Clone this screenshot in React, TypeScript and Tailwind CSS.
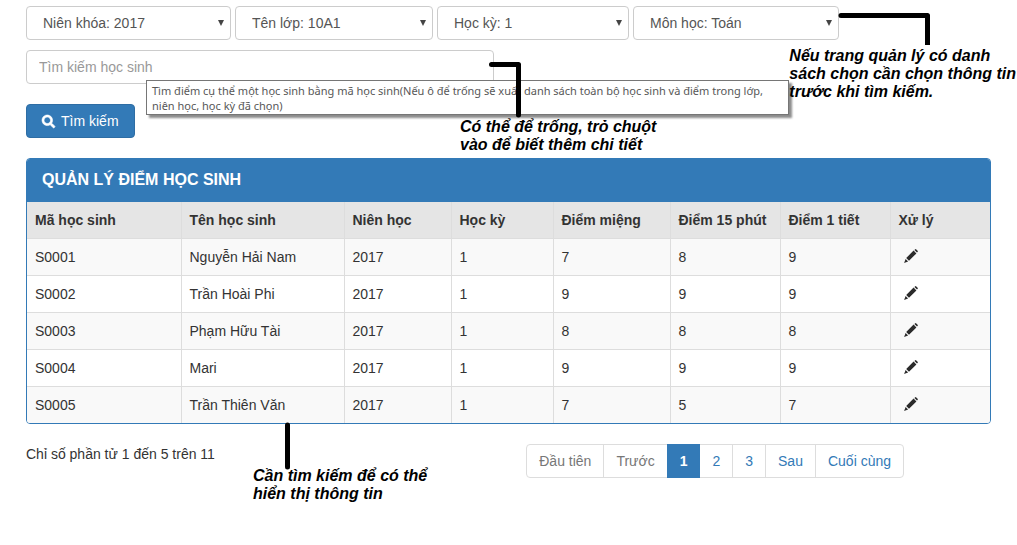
import { FaSearch } from 'react-icons/fa';

type Filter = { id: string; label: string; value: string };
type Student = { id: string; name: string; year: string; term: string; scores: string[] };

const filters: Filter[] = [
  { id: 'year', label: 'Niên khóa', value: '2017' },
  { id: 'class', label: 'Tên lớp', value: '10A1' },
  { id: 'term', label: 'Học kỳ', value: '1' },
  { id: 'subject', label: 'Môn học', value: 'Toán' },
];

const headers = ['Mã học sinh', 'Tên học sinh', 'Niên học', 'Học kỳ', 'Điểm miệng', 'Điểm 15 phút', 'Điểm 1 tiết', 'Xử lý'];

const students: Student[] = [
  { id: 'S0001', name: 'Nguyễn Hải Nam', year: '2017', term: '1', scores: ['7', '8', '9'] },
  { id: 'S0002', name: 'Trần Hoài Phi', year: '2017', term: '1', scores: ['9', '9', '9'] },
  { id: 'S0003', name: 'Phạm Hữu Tài', year: '2017', term: '1', scores: ['8', '8', '8'] },
  { id: 'S0004', name: 'Mari', year: '2017', term: '1', scores: ['9', '9', '9'] },
  { id: 'S0005', name: 'Trần Thiên Văn', year: '2017', term: '1', scores: ['7', '5', '7'] },
];

const cell = 'border-r border-[#ddd] px-2 last:border-r-0';
const note = 'absolute z-20 whitespace-nowrap text-[16px] leading-[18px] font-bold italic text-black';
const pageItem = 'block border border-[#ddd] px-3 py-[6px] leading-5';

function FilterSelect({ filter }: { filter: Filter }) {
  return (
    <div className="relative">
      <select
        id={filter.id}
        aria-label={filter.label}
        className="h-[34px] w-full appearance-none rounded border border-[#ccc] bg-white pr-6 pl-4 text-sm text-[#555]"
      >
        <option>{`${filter.label}: ${filter.value}`}</option>
      </select>
      <svg viewBox="0 0 6 6" className="pointer-events-none absolute top-[14px] right-[7px] h-[6px] w-[6px]" fill="#444" aria-hidden="true">
        <path d="M0 0h6L3 6z" />
      </svg>
    </div>
  );
}

function Pencil() {
  return (
    <svg viewBox="0 0 14 14" className="h-[14px] w-[14px]" fill="#2b2b2b" aria-hidden="true">
      <path d="M10.400 1 11.300.3q.5-.4 1 .1l1.300 1.300q.5.5.1 1l-.7.9zM9.600 1.600l2.800 2.800-7.400 7.400-2.800-2.800zM1.600 9.900l2.500 2.500L.1 13.900z" />
    </svg>
  );
}

function Pagination() {
  return (
    <nav aria-label="Phân trang">
      <ul className="flex -space-x-px text-[#337ab7]">
        <li><a href="#first" className={`${pageItem} rounded-l text-[#777]`}>Đầu tiên</a></li>
        <li><a href="#prev" className={`${pageItem} text-[#777]`}>Trước</a></li>
        <li className="relative z-10">
          <a href="#1" aria-current="page" className="block border border-[#337ab7] bg-[#337ab7] px-3 py-[6px] leading-5 font-bold text-white">1</a>
        </li>
        <li><a href="#2" className={pageItem}>2</a></li>
        <li><a href="#3" className={pageItem}>3</a></li>
        <li><a href="#next" className={pageItem}>Sau</a></li>
        <li><a href="#last" className={`${pageItem} rounded-r`}>Cuối cùng</a></li>
      </ul>
    </nav>
  );
}

export default function App() {
  return (
    <main className="min-h-screen bg-white px-[26px] pt-[6px] pb-12 font-['Liberation_Sans',Arial,sans-serif] text-sm text-[#333]">
      <form onSubmit={(e) => e.preventDefault()}>
        <div className="relative">
          <div className="grid grid-cols-[205fr_198fr_192fr_206fr] gap-1 pr-[152px]">
            {filters.map((f) => <FilterSelect key={f.id} filter={f} />)}
          </div>
          <svg viewBox="0 0 92 33" className="absolute top-[6px] right-[61px] h-[33px] w-[92px]" fill="none" stroke="#000" strokeWidth="5" strokeLinecap="round" strokeLinejoin="round" aria-hidden="true">
            <path d="M3 3.500H89.500V36" />
          </svg>
          <p className={`${note} top-[41px] -right-[25px]`}>
            Nếu trang quản lý có danh<br />sách chọn cần chọn thông tin<br />trước khi tìm kiếm.
          </p>
        </div>

        <div className="relative mt-[10px] w-[468px] max-w-full">
          <input
            type="text"
            aria-label="Tìm kiếm học sinh"
            placeholder="Tìm kiếm học sinh"
            className="block h-[34px] w-full rounded border border-[#ccc] px-3 text-sm placeholder:text-[#999]"
          />
          <div
            role="tooltip"
            className="absolute top-[30px] left-[120px] z-10 w-[643px] border border-[#767676] bg-white px-[5px] pt-[2px] pb-px font-['Noto_Sans',sans-serif] text-[11px] leading-[15px] whitespace-nowrap text-[#575757] shadow-[3px_3px_2px_rgba(0,0,0,0.45)]"
          >
            Tìm điểm cụ thể một học sinh bằng mã học sinh(Nếu ô để trống sẽ xuất danh sách toàn bộ học sinh và điểm trong lớp,
            <br />niên học, học kỳ đã chọn)
          </div>
          <svg viewBox="0 0 34 56" className="absolute top-[12px] left-[462px] z-20 h-[56px] w-[34px]" fill="none" stroke="#000" strokeWidth="5" strokeLinecap="round" strokeLinejoin="round" aria-hidden="true">
            <path d="M3.500 2.500H30.500V53" />
          </svg>
          <p className={`${note} top-[68px] left-[434px]`}>
            Có thể để trống, trỏ chuột<br />vào để biết thêm chi tiết
          </p>
        </div>

        <button type="submit" className="mt-5 flex h-[34px] items-center gap-[6px] rounded border border-[#2e6da4] bg-[#337ab7] px-[15px] text-white">
          <FaSearch className="h-[13px] w-[13px] overflow-visible stroke-white stroke-[24]" aria-hidden="true" />
          Tìm kiếm
        </button>
      </form>

      <section className="mt-5 overflow-hidden rounded border border-[#337ab7]">
        <h1 className="bg-[#337ab7] px-[15px] pt-[11px] pb-3 text-base leading-5 font-bold text-white">QUẢN LÝ ĐIỂM HỌC SINH</h1>
        <table className="w-full table-fixed border-collapse text-left">
          <colgroup>
            <col className="w-[154px]" />
            <col className="w-[163px]" />
            <col className="w-[107px]" />
            <col className="w-[102px]" />
            <col className="w-[117px]" />
            <col className="w-[110px]" />
            <col className="w-[110px]" />
            <col className="w-[100px]" />
          </colgroup>
          <thead>
            <tr className="h-[36px] bg-[#e5e5e5]">
              {headers.map((h) => <th key={h} className={`${cell} whitespace-nowrap`}>{h}</th>)}
            </tr>
          </thead>
          <tbody>
            {students.map((s) => (
              <tr key={s.id} className="h-[37px] border-t border-[#ddd] odd:bg-[#f9f9f9]">
                {[s.id, s.name, s.year, s.term, ...s.scores].map((v, i) => <td key={i} className={cell}>{v}</td>)}
                <td className={cell}>
                  <button type="button" aria-label={`Sửa ${s.name}`} className="block px-[5px] pb-[2px]"><Pencil /></button>
                </td>
              </tr>
            ))}
          </tbody>
        </table>
      </section>

      <footer className="relative mt-5 flex items-start justify-between pr-[87px]">
        <p className="leading-5">Chỉ số phần tử 1 đến 5 trên 11</p>
        <Pagination />
        <svg viewBox="0 0 6 48" className="absolute -top-[22px] left-[259px] h-[48px] w-[6px]" fill="none" stroke="#000" strokeWidth="5" strokeLinecap="round" aria-hidden="true">
          <path d="M2.500 3V45" />
        </svg>
        <p className={`${note} top-[23px] left-[227px]`}>
          Cần tìm kiếm để có thể<br />hiển thị thông tin
        </p>
      </footer>
    </main>
  );
}
